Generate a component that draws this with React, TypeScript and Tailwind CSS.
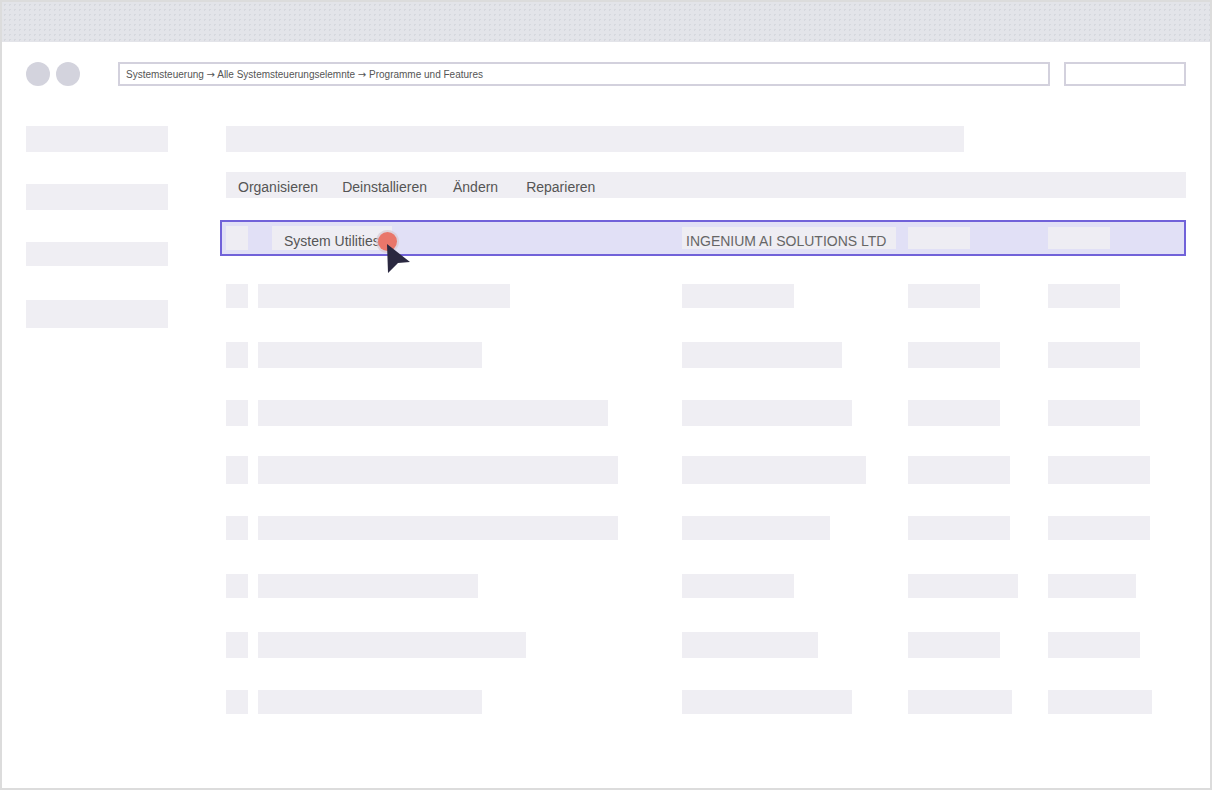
import React from 'react';

type Row = { mt: string; h: string; name: number; pub: number; size: number; ver: number };

// top margin / height / bar widths per placeholder row
const rows: Row[] = [
  { mt: 'mt-[28px]', h: 'h-[24px]', name: 252, pub: 112, size: 72, ver: 72 },
  { mt: 'mt-[34px]', h: 'h-[26px]', name: 224, pub: 160, size: 92, ver: 92 },
  { mt: 'mt-[32px]', h: 'h-[26px]', name: 350, pub: 170, size: 92, ver: 92 },
  { mt: 'mt-[30px]', h: 'h-[28px]', name: 360, pub: 184, size: 102, ver: 102 },
  { mt: 'mt-[32px]', h: 'h-[24px]', name: 360, pub: 148, size: 102, ver: 102 },
  { mt: 'mt-[34px]', h: 'h-[24px]', name: 220, pub: 112, size: 110, ver: 88 },
  { mt: 'mt-[34px]', h: 'h-[26px]', name: 268, pub: 136, size: 92, ver: 92 },
  { mt: 'mt-[32px]', h: 'h-[24px]', name: 224, pub: 170, size: 104, ver: 104 },
];

function Cursor() {
  return (
    <>
      <span className="absolute left-[156px] top-[10px] w-[19px] h-[19px] rounded-full bg-[#e9766a] ring-2 ring-[#d9c9d2]/70" />
      <svg className="absolute left-[164px] top-[22px]" width="26" height="30" viewBox="0 0 26 30">
        <polygon points="1,0 24,18 12,19 2,29" fill="#2a2840" />
      </svg>
    </>
  );
}

const Arrow = () => <span className="font-['DejaVu_Sans',sans-serif]">→</span>;

export default function App() {
  return (
    <div className="w-[1212px] h-[790px] border-2 border-[#dcdcdc] bg-white flex flex-col font-['Liberation_Sans',Arial,sans-serif] overflow-hidden">
      {/* window title strip */}
      <div className="h-[40px] shrink-0 bg-[#e3e4e9] bg-[radial-gradient(#d6d8de_1px,transparent_1px)] bg-[length:5px_5px]" />

      {/* address row */}
      <div className="mt-[20px] flex items-center pl-[24px] pr-[24px]">
        <span className="w-[24px] h-[24px] rounded-full bg-[#d3d3dd]" />
        <span className="ml-[6px] w-[24px] h-[24px] rounded-full bg-[#d3d3dd]" />
        <div className="ml-[38px] w-[932px] h-[24px] border-2 border-[#d3d1dd] flex items-center pl-[6px] text-[10px] text-[#555] whitespace-pre">
          Systemsteuerung <Arrow /> Alle Systemsteuerungselemnte <Arrow /> Programme und Features
        </div>
        <div className="ml-[14px] w-[122px] h-[24px] border-2 border-[#d3d1dd]" />
      </div>

      <div className="mt-[40px] flex pl-[24px]">
        {/* sidebar */}
        <div className="w-[142px] flex flex-col">
          <div className="h-[26px] bg-[#efeef3]" />
          <div className="mt-[32px] h-[26px] bg-[#efeef3]" />
          <div className="mt-[32px] h-[24px] bg-[#efeef3]" />
          <div className="mt-[34px] h-[28px] bg-[#efeef3]" />
        </div>

        {/* main */}
        <div className="ml-[58px] w-[960px] flex flex-col">
          <div className="w-[738px] h-[26px] bg-[#efeef3]" />
          <div className="mt-[20px] h-[26px] bg-[#efeef3] flex items-center pt-[4px] pl-[12px] text-[14px] text-[#555]">
            <span>Organisieren</span>
            <span className="ml-[24px]">Deinstallieren</span>
            <span className="ml-[26px]">Ändern</span>
            <span className="ml-[28px]">Reparieren</span>
          </div>

          {/* selected program */}
          <div className="relative mt-[22px] -ml-[6px] h-[36px] border-2 border-[#7162d9] bg-[#e1e0f6] flex items-center pl-[4px]">
            <div className="w-[46px]">
              <div className="w-[22px] h-[24px] bg-[#eeedf3]" />
            </div>
            <div className="w-[410px]">
              <div className="w-[120px] h-[24px] bg-[#eeedf3] flex items-center pt-[6px] pl-[12px] text-[14px] text-[#555]">
                System Utilities
              </div>
            </div>
            <div className="w-[226px]">
              <div className="w-[214px] h-[22px] bg-[#eeedf3] flex items-center pt-[6px] pl-[4px] text-[14px] text-[#666]">
                INGENIUM AI SOLUTIONS LTD
              </div>
            </div>
            <div className="w-[140px]">
              <div className="w-[62px] h-[22px] bg-[#eeedf3]" />
            </div>
            <div className="w-[62px] h-[22px] bg-[#eeedf3]" />
            <Cursor />
          </div>

          {/* placeholder programs */}
          {rows.map((r, i) => (
            <div key={i} className={`flex ${r.mt} ${r.h}`}>
              <div className="w-[32px]">
                <div className="w-[22px] h-full bg-[#efeef3]" />
              </div>
              <div className="w-[424px]">
                <div className="h-full bg-[#efeef3]" style={{ width: r.name }} />
              </div>
              <div className="w-[226px]">
                <div className="h-full bg-[#efeef3]" style={{ width: r.pub }} />
              </div>
              <div className="w-[140px]">
                <div className="h-full bg-[#efeef3]" style={{ width: r.size }} />
              </div>
              <div className="h-full bg-[#efeef3]" style={{ width: r.ver }} />
            </div>
          ))}
        </div>
      </div>
    </div>
  );
}
